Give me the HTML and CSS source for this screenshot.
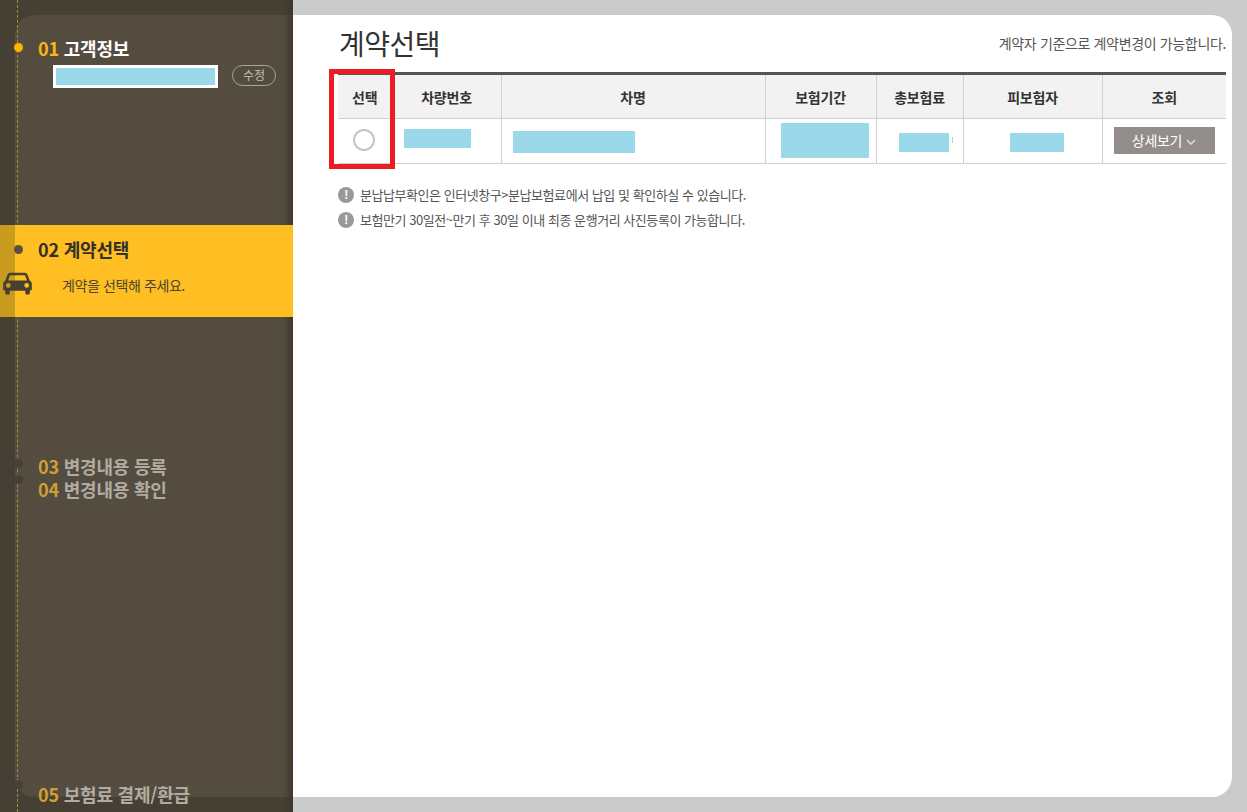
FILE: index.html
```html
<!DOCTYPE html>
<html lang="ko">
<head>
<meta charset="utf-8">
<title>계약선택</title>
<link rel="stylesheet" href="styles.css">
</head>
<body>
<div class="app">
  <aside class="sidebar">
    <div class="panel">
      <section class="step step-one">
        <h2 class="step-title done"><span class="num">01</span> 고객정보</h2>
        <div class="customer">
          <span class="masked-name"></span>
          <a class="edit-pill">수정</a>
        </div>
        <i class="dot dot-on"></i>
      </section>
      <section class="step step-two">
        <h2 class="step-title current"><span class="num">02</span> 계약선택</h2>
        <p class="step-desc">계약을 선택해 주세요.</p>
        <i class="dot"></i>
        <svg class="car" viewBox="0 0 30 24" aria-hidden="true">
          <path fill="#45402f" fill-rule="evenodd" d="M7.5 1h15c1.4 0 2.4.8 2.9 2l2.2 6c1.3.7 2.2 2 2.2 3.5V19h-2v3.2c0 .9-.6 1.3-1.3 1.3h-2c-.8 0-1.4-.5-1.4-1.3V19.5H7v2.7c0 .8-.6 1.3-1.4 1.3h-2c-.7 0-1.3-.4-1.3-1.3V19H.2v-6.500C.2 11 1.100 9.700 2.400 9l2.200-6C5.100 1.800 6.100 1 7.500 1zM8 3.500c-.6 0-1 .3-1.200.9L5.200 9h19.600l-1.600-4.600c-.2-.6-.6-.9-1.200-.9H8zM5.500 11.500a2.500 2.500 0 1 0 0 5 2.500 2.500 0 0 0 0-5zm19 0a2.500 2.500 0 1 0 0 5 2.500 2.500 0 0 0 0-5z"/>
        </svg>
      </section>
      <section class="step step-three">
        <h2 class="step-title"><span class="num">03</span> 변경내용 등록</h2>
        <i class="dot"></i>
      </section>
      <section class="step step-four">
        <h2 class="step-title"><span class="num">04</span> 변경내용 확인</h2>
        <i class="dot"></i>
      </section>
      <section class="step step-five">
        <h2 class="step-title"><span class="num">05</span> 보험료 결제/환급</h2>
        <i class="dot"></i>
      </section>
    </div>
    <div class="guide-line"></div>
  </aside>

  <main class="content">
    <header class="content-head">
      <h1>계약선택</h1>
      <p>계약자 기준으로 계약변경이 가능합니다.</p>
    </header>
    <div class="table-wrap">
      <table class="contracts">
        <colgroup>
          <col class="c1"><col class="c2"><col class="c3"><col class="c4"><col class="c5"><col class="c6"><col class="c7">
        </colgroup>
        <thead>
          <tr><th>선택</th><th>차량번호</th><th>차명</th><th>보험기간</th><th>총보험료</th><th>피보험자</th><th>조회</th></tr>
        </thead>
        <tbody>
          <tr>
            <td class="cell-radio"><span class="radio"></span></td>
            <td class="cell-plate"><span class="mask mask-plate"></span></td>
            <td class="cell-name"><span class="mask mask-name"></span></td>
            <td class="cell-period"><span class="mask mask-period"></span></td>
            <td class="cell-premium"><span class="mask mask-premium"></span><span class="mask mask-sliver"></span></td>
            <td class="cell-insured"><span class="mask mask-insured"></span></td>
            <td class="cell-action">
              <button class="detail-btn" type="button">상세보기
                <svg class="chev" viewBox="0 0 10 6" aria-hidden="true"><path d="M1 1l4 4 4-4" fill="none" stroke="#d9d6d4" stroke-width="1.700"/></svg>
              </button>
            </td>
          </tr>
        </tbody>
      </table>
      <div class="highlight"></div>
    </div>
    <ul class="notes">
      <li><i class="bang">!</i>분납납부확인은 인터넷창구&gt;분납보험료에서 납입 및 확인하실 수 있습니다.</li>
      <li><i class="bang">!</i>보험만기 30일전~만기 후 30일 이내 최종 운행거리 사진등록이 가능합니다.</li>
    </ul>
  </main>
</div>
</body>
</html>
```
FILE: styles.css
```css
* { box-sizing: border-box; }
html, body { margin: 0; height: 100%; }
body {
  background: #cbcbcb;
  font-family: "Noto Sans CJK KR", "Noto Sans", sans-serif;
  color: #333;
  overflow: hidden;
}
.app { display: flex; height: 812px; width: 1247px; }

/* sidebar */
.sidebar {
  position: relative;
  width: 293px;
  flex: none;
  background: #454033;
  padding: 15px 0;
}
.panel {
  height: 782px;
  margin-left: 15px;
  background: linear-gradient(to right, #544d3f 0, #544d3f 270px, #4a4436 278px);
  border-radius: 20px 0 0 20px;
}
.sidebar::after {
  content: "";
  position: absolute;
  top: 0; right: 0; bottom: 0;
  width: 12px;
  background: linear-gradient(to right, rgba(50,46,36,0), rgba(50,46,36,.45));
  pointer-events: none;
}
.guide-line {
  position: absolute;
  left: 17px; top: 0; bottom: 0;
  border-left: 1px dashed #a58a3f;
  z-index: 3;
}
.step { position: relative; }
.step-one { height: 210px; padding-top: 19px; }
.step-two {
  height: 92px;
  margin-left: -15px;
  padding-top: 10px;
  background: linear-gradient(to right, #c99c20 0, #c99c20 15px, #ffbe22 15px);
  z-index: 4;
}
.step-three { height: 293px; padding-top: 135px; }
.step-four { height: 157px; padding-top: 0; }
.step-five { height: 30px; }
.step-three { height: 305px; padding-top: 135px; }
.step-four { height: 158px; padding-top: 0; margin-top: -147px; }
.step-five { margin-top: 147px; }

.step-title {
  margin: 0 0 0 23px;
  font-size: 18px;
  line-height: 28px;
  font-weight: 700;
  letter-spacing: -.2px;
  color: #b0aca4;
  white-space: nowrap;
}
.step-title .num { color: #cf9f34; }
.step-title.done { color: #fff; }
.step-title.done .num { color: #fdb515; }
.step-title.current { margin-left: 38px; color: #333026; }
.step-title.current .num { color: #333026; }

.customer {
  display: flex;
  align-items: center;
  margin: 3px 0 0 38px;
}
.masked-name {
  width: 165px;
  height: 23px;
  background: #9bd8ea;
  border: 3px solid #fff;
}
.edit-pill {
  width: 44px;
  height: 21px;
  margin: -3px 0 0 14px;
  border: 1px solid #a9a599;
  border-radius: 11px;
  color: #c0bdb5;
  font-size: 12px;
  line-height: 18px;
  text-align: center;
}
.dot {
  position: absolute;
  left: -1px;
  top: 28px;
  width: 9px;
  height: 9px;
  border-radius: 50%;
  background: #45403a;
  z-index: 5;
}
.dot-on { background: #ffb400; }
.step-two .dot { left: 14px; top: 20px; background: #56503f; }
.step-three .dot { top: 142px; }
.step-four .dot { top: 0; }
.step-five .dot { top: 0; }

.step-desc {
  margin: 12px 0 0 62px;
  font-size: 14px;
  line-height: 20px;
  letter-spacing: -.4px;
  color: #4c4630;
}
.car {
  position: absolute;
  left: 3px;
  top: 46px;
  width: 29px;
  height: 25px;
}

/* main */
.content {
  width: 939px;
  height: 782px;
  margin-top: 15px;
  background: #fff;
  border-radius: 0 20px 20px 0;
  padding: 0 6px 0 45px;
  flex: none;
}
.content-head {
  display: flex;
  justify-content: space-between;
  align-items: flex-start;
  height: 57px;
}
.content-head h1 {
  margin: 6px 0 0 1px;
  font-size: 28px;
  line-height: 44px;
  font-weight: 400;
  letter-spacing: -.5px;
  color: #333;
}
.content-head p {
  margin: 16px 0 0;
  font-size: 14px;
  line-height: 24px;
  letter-spacing: -.35px;
  color: #555;
}
.table-wrap { position: relative; width: 888px; }
.contracts {
  width: 888px;
  table-layout: fixed;
  border-collapse: collapse;
  border-top: 3px solid #555;
}
.c1 { width: 54px; } .c2 { width: 109px; } .c3 { width: 264px; } .c4 { width: 111px; }
.c5 { width: 87px; } .c6 { width: 139px; } .c7 { width: 124px; }
.contracts th {
  height: 45px;
  background: #f2f2f2;
  font-size: 14px;
  font-weight: 700;
  letter-spacing: -.2px;
  color: #333;
  border-left: 1px solid #d0d0d0;
  border-bottom: 1px solid #d0d0d0;
  padding: 0;
}
.contracts td {
  height: 45px;
  padding: 0;
  vertical-align: top;
  border-left: 1px solid #d0d0d0;
  border-bottom: 1px solid #d0d0d0;
}
.contracts th:first-child, .contracts td:first-child { border-left: 0; }
.mask { display: block; background: #9bd8ea; }
.cell-radio { text-align: center; }
.radio {
  display: block;
  width: 22px;
  height: 22px;
  margin: 10px 0 0 15px;
  border: 2px solid #c4c4c4;
  border-radius: 50%;
  background: #fff;
}
.mask-plate { width: 67px; height: 19px; margin: 10px 0 0 11px; }
.mask-name { width: 122px; height: 22px; margin: 12px 0 0 11px; }
.mask-period { width: 88px; height: 35px; margin: 4px 0 0 15px; }
.cell-premium { position: relative; }
.mask-premium { width: 50px; height: 19px; margin: 14px 0 0 22px; }
.mask-sliver { position: absolute; left: 75px; top: 18px; width: 1px; height: 6px; }
.mask-insured { width: 54px; height: 19px; margin: 14px 0 0 46px; }
.detail-btn {
  display: flex;
  align-items: center;
  justify-content: center;
  gap: 4px;
  width: 101px;
  height: 27px;
  margin: 8px 0 0 11px;
  padding: 0;
  border: 0;
  background: #938d8c;
  color: #fff;
  font: 14px/27px "Noto Sans CJK KR", sans-serif;
  letter-spacing: -.3px;
}
.chev { width: 10px; height: 6px; margin-top: 2px; }
.highlight {
  position: absolute;
  left: -9px;
  top: -3px;
  width: 66px;
  height: 100px;
  border: 5px solid #ed1c24;
  pointer-events: none;
}

.notes { list-style: none; margin: 18px 0 0; padding: 0; }
.notes li {
  display: flex;
  align-items: center;
  height: 25px;
  font-size: 13px;
  letter-spacing: -.45px;
  color: #555;
}
.bang {
  flex: none;
  width: 16px;
  height: 16px;
  margin-right: 6px;
  border-radius: 50%;
  background: #999;
  color: #fff;
  font: 700 12px/16px "Liberation Sans", sans-serif;
  text-align: center;
}
```
